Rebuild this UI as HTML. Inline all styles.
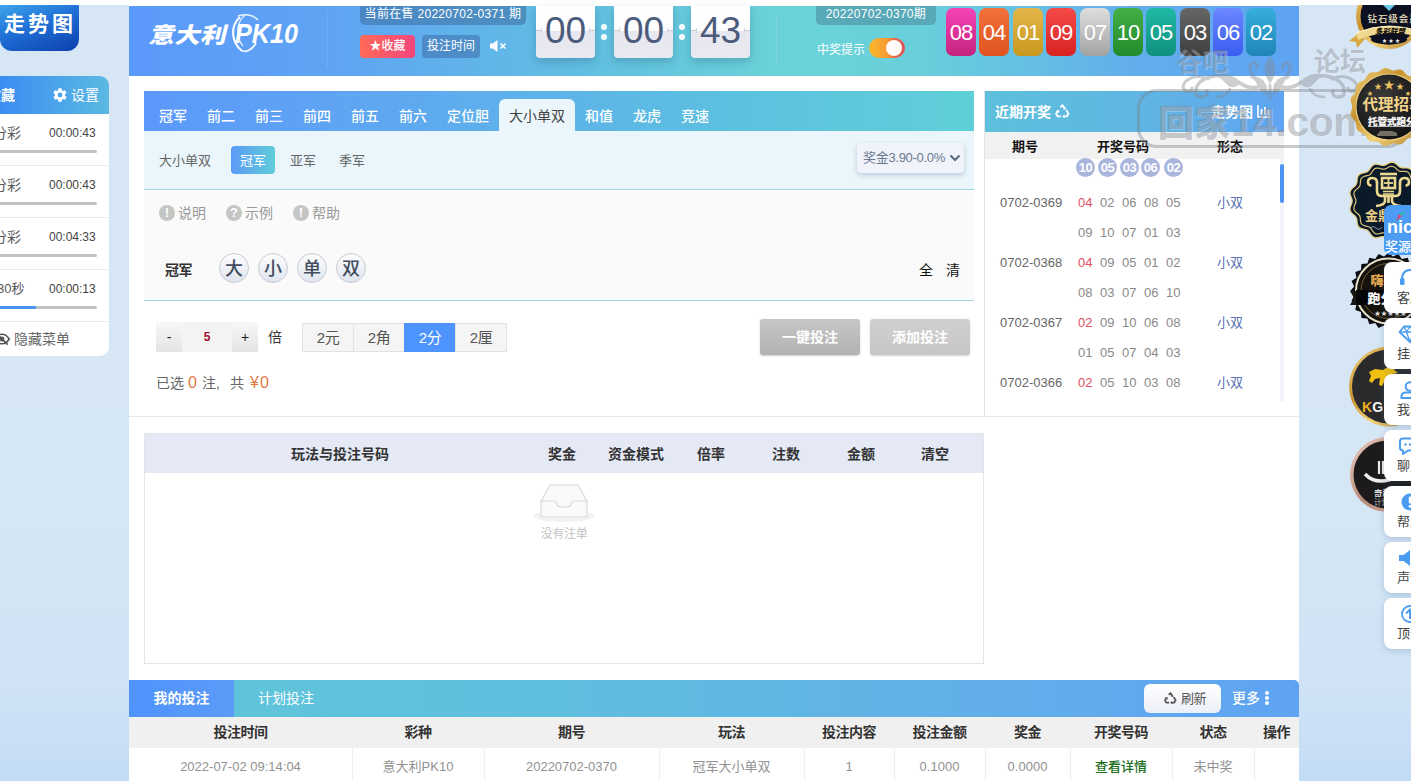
<!DOCTYPE html>
<html lang="zh-CN">
<head>
<meta charset="utf-8">
<title>意大利PK10</title>
<style>
*{box-sizing:border-box;margin:0;padding:0}
html,body{width:1411px;height:781px;overflow:hidden}
body{position:relative;background:linear-gradient(180deg,#d7e6f5 0%,#d5e6f5 68%,#cfe3f5 88%,#c3dcf5 100%);font-family:"Liberation Sans","Noto Sans CJK SC",sans-serif;font-size:13px;color:#333}
.abs{position:absolute}
.topbar{left:0;top:0;width:1411px;height:5px;background:#fff}
.trend{left:0;top:5px;width:79px;height:46px;border-radius:0 0 12px 12px;background:linear-gradient(160deg,#3fa4ec 0%,#1f6fd6 45%,#0d3fae 100%);color:#fff;font-weight:bold;font-size:21px;line-height:37px;letter-spacing:3px;padding-left:4px;white-space:nowrap}
/* sidebar */
.side{left:0;top:76px;width:109px;height:280px;background:#fff;border-radius:0 9px 9px 0;overflow:hidden}
.side .hd{left:0;top:0;width:109px;height:38px;background:linear-gradient(90deg,#3b8df2,#5bb9e2);color:#fff;font-size:14px;line-height:38px}
.side .row{left:0;width:109px;height:52px;border-bottom:1px solid #ececec}
.side .row .nm{left:-7px;top:10px;font-size:14px;color:#555;line-height:18px}
.side .row .tm{left:49px;top:10px;font-size:12px;color:#444;line-height:18px;letter-spacing:0}
.side .row .bar{left:-4px;top:36px;width:101px;height:3px;border-radius:2px;background:#c2c2c2}
/* main */
.main{left:129px;top:5px;width:1170px;height:776px;background:#fff}
.header{left:129px;top:6px;width:1170px;height:70px;background:linear-gradient(90deg,#5b99fb 0%,#5fa5f3 18%,#62c0e0 40%,#6ad3d8 56%,#69cfdb 68%,#62aeec 86%,#5fa3f3 100%)}
.pill{height:19px;top:0;border-radius:0 0 5px 5px;background:rgba(60,110,160,.55);color:#fff;font-size:12px;line-height:17px;text-align:center;white-space:nowrap;letter-spacing:.3px}
.btn-fav{left:360px;top:35px;width:55px;height:23px;border-radius:4px;background:linear-gradient(90deg,#ff6a58,#f2467e);color:#fff;font-size:12px;font-weight:500;line-height:23px;text-align:center;letter-spacing:0}
.btn-time{left:422px;top:35px;width:58px;height:23px;border-radius:4px;background:rgba(60,110,170,.55);color:#fff;font-size:12px;line-height:23px;text-align:center;letter-spacing:0}
.flip{top:6px;width:59px;height:52px;border-radius:0 0 4px 4px;background:linear-gradient(180deg,#fff 0,#fdfdfe 47%,#e7e8ef 49%,#e9eaf1 100%);box-shadow:0 4px 8px rgba(40,90,120,.3);color:#4c5b7c;font-size:37px;line-height:49px;text-align:center;letter-spacing:0;font-family:"Liberation Sans",sans-serif}
.dot{width:6px;height:6px;border-radius:50%;background:#f4fbff}
.ball{top:8px;width:30px;height:48px;border-radius:7px;color:#fff;font-size:22px;line-height:50px;text-align:center;letter-spacing:-1px}

.tabbar{left:144px;top:91px;width:830px;height:40px;background:linear-gradient(90deg,#5b99fb 0%,#5fa8f0 30%,#5cc0e0 70%,#5fd0d8 100%)}
.tab{top:99px;height:32px;color:#fff;font-weight:500;font-size:14px;line-height:35px;white-space:nowrap;letter-spacing:0}
.tab.on{background:#eaf6fb;color:#444;font-weight:400;border-radius:6px 6px 0 0;text-align:center}
.subbar{left:144px;top:131px;width:830px;height:59px;background:#eaf6fb;border-bottom:1px solid #9ed6e2}
.sub{top:146px;height:28px;font-size:13px;line-height:30px;color:#666;white-space:nowrap;letter-spacing:0}
.play{left:144px;top:190px;width:830px;height:111px;background:#fafafa;border-bottom:1px solid #9ed6dc}
.hint{top:204px;font-size:14px;color:#999;line-height:18px;white-space:nowrap}
.ic{top:205px;width:16px;height:16px;border-radius:50%;background:#c4c6c4;color:#fff;font-size:13px;font-weight:bold;line-height:16px;text-align:center;font-family:"Liberation Sans",sans-serif}
.opt{top:253px;width:30px;height:30px;border-radius:50%;border:1px solid #c9ccd2;background:linear-gradient(#fdfdfe,#dfe5ef);color:#444c5e;font-size:18px;line-height:30px;text-align:center;font-weight:500}
.stp{top:322px;height:30px;background:linear-gradient(#f7f7f7,#e4e4e4);color:#222;font-size:14px;line-height:30px;text-align:center}
.mode{top:323px;width:52px;height:29px;border:1px solid #e3e3e3;background:#f5f5f5;color:#555;font-size:15px;line-height:27px;text-align:center;letter-spacing:-.5px}
.mode.on{background:#4d94ff;border-color:#4d94ff;color:#fff}
.bigbtn{top:319px;width:100px;height:36px;border-radius:3px;color:#fff;font-size:14px;font-weight:bold;line-height:36px;text-align:center;letter-spacing:0;box-shadow:0 1px 2px rgba(0,0,0,.2)}

.th3{top:138px;font-size:13px;font-weight:bold;color:#111;line-height:18px;text-align:center;white-space:nowrap}
.rr{font-size:13px;line-height:18px;color:#888;white-space:nowrap}
.cir{top:158px;width:19px;height:19px;border-radius:50%;background:#a9b5dd;color:#fff;font-size:13px;font-weight:bold;line-height:19px;text-align:center;letter-spacing:-.5px}

.otab{left:144px;top:433px;width:840px;height:231px;border:1px solid #e3e5e8;background:#fff}
.oth{top:445px;font-size:14px;font-weight:bold;color:#333;line-height:18px;text-align:center;white-space:nowrap;letter-spacing:0}
.bbar{left:129px;top:680px;width:1170px;height:37px;border-radius:0 5px 0 0;background:linear-gradient(90deg,#5fc6d9 0%,#60bfde 35%,#62b0e8 70%,#5fa3f2 100%)}
.bth{top:723px;font-size:14px;font-weight:bold;color:#333;line-height:18px;text-align:center;white-space:nowrap;letter-spacing:-.5px}
.btd{top:758px;font-size:13px;color:#929292;line-height:18px;text-align:center;white-space:nowrap}
.vl{top:748px;width:1px;height:33px;background:#eeeeee}
.fcard{left:1384px;width:52px;height:51px;border-radius:8px;background:#fff;box-shadow:0 2px 6px rgba(80,110,150,.28);overflow:hidden}
.fcard svg{position:absolute;left:14px;top:7px}
.fcard span{position:absolute;left:13px;top:27px;font-size:13px;color:#444;line-height:18px;white-space:nowrap}
.badge{border-radius:50%}

.wm{color:rgba(120,126,132,.40);font-weight:bold;line-height:36px;white-space:nowrap;text-shadow:1px 1px 0 rgba(255,255,255,.25)}
.sel{top:373px;font-size:14px;color:#666;line-height:20px;white-space:nowrap}
</style>
</head>
<body>
<div class="abs topbar"></div>
<div class="abs main"></div>
<div class="abs trend">走势图</div>
<div class="abs side">
 <div class="abs hd"><span class="abs" style="left:-13px;font-weight:bold">收藏</span>
  <svg class="abs" style="left:52px;top:11px" width="16" height="16" viewBox="0 0 24 24"><path fill="#fff" d="M19.4 13c.04-.33.06-.66.06-1s-.02-.67-.06-1l2.1-1.65a.5.5 0 0 0 .12-.64l-2-3.46a.5.5 0 0 0-.61-.22l-2.49 1a7.3 7.3 0 0 0-1.73-1l-.38-2.65A.5.5 0 0 0 13.900 2h-4a.5.5 0 0 0-.49.420l-.38 2.650a7.700 7.700 0 0 0-1.730 1l-2.490-1a.5.5 0 0 0-.61.220l-2 3.460a.5.5 0 0 0 .12.640L4.600 11c-.04.330-.06.660-.06 1s.02.670.06 1l-2.100 1.650a.5.5 0 0 0-.12.640l2 3.460c.120.220.390.300.610.220l2.490-1c.520.400 1.100.730 1.730 1l.380 2.650c.03.240.240.420.490.420h4c.250 0 .460-.180.490-.420l.380-2.650a7.300 7.300 0 0 0 1.730-1l2.490 1c.220.080.490 0 .610-.220l2-3.460a.5.5 0 0 0-.12-.640L19.400 13zM12 15.600A3.600 3.600 0 1 1 12 8.400a3.600 3.600 0 0 1 0 7.200z"/></svg>
  <span class="abs" style="left:71px">设置</span></div>
 <div class="abs row" style="top:38px"><span class="abs nm">分彩</span><span class="abs tm">00:00:43</span><div class="abs bar"></div></div>
 <div class="abs row" style="top:90px"><span class="abs nm">分彩</span><span class="abs tm">00:00:43</span><div class="abs bar"></div></div>
 <div class="abs row" style="top:142px"><span class="abs nm">分彩</span><span class="abs tm">00:04:33</span><div class="abs bar"></div></div>
 <div class="abs row" style="top:194px"><span class="abs nm" style="left:-3px;font-size:13px">30秒</span><span class="abs tm">00:00:13</span><div class="abs bar"><div class="abs" style="left:0;top:0;width:40px;height:3px;background:#4d94f0"></div></div></div>
 <svg class="abs" style="left:-6px;top:256px" width="16" height="14" viewBox="0 0 20 16"><path fill="none" stroke="#555" stroke-width="2" d="M1 8c3-5 6-6 9-6s6 1 9 6c-3 5-6 6-9 6s-6-1-9-6z"/><circle cx="10" cy="8" r="3" fill="#555"/><path stroke="#555" stroke-width="2.200" d="M3 1l14 14"/></svg>
 <span class="abs" style="left:14px;top:254px;font-size:14px;color:#666;line-height:18px">隐藏菜单</span>
</div>
<div class="abs header"></div>
<div class="abs" style="left:150px;top:14px;width:160px;height:40px;color:#fff;white-space:nowrap"><span class="abs" id="lg1" style="left:0;top:6px;font-size:22px;line-height:32px;font-weight:900;transform-origin:0 50%;transform:scaleX(1.17) skewX(-12deg)">意大利</span><span class="abs" id="lg2" style="left:85px;top:2px;font-size:28px;line-height:36px;font-weight:bold;font-style:italic;font-family:'Liberation Sans',sans-serif;transform-origin:0 50%;transform:scaleX(.9)">PK10</span>
<svg class="abs" style="left:78px;top:0px" width="40" height="42" viewBox="0 0 40 42"><path d="M12 3C2 12 3 28 14 37" fill="none" stroke="#fff" stroke-width="2.200" opacity=".95"/><path d="M17 1C8 9 7 22 15 32" fill="none" stroke="#fff" stroke-width="1.300" opacity=".8"/><path d="M10 2q12-4 20 4" fill="none" stroke="#fff" stroke-width="1.500" opacity=".85"/><path d="M14 37q8 2 14-8" fill="none" stroke="#fff" stroke-width="1.800" opacity=".9"/></svg></div>
<div class="abs" style="left:327px;top:12px;width:1px;height:56px;background:rgba(255,255,255,.09)"></div>
<div class="abs pill" style="left:360px;top:6px;width:166px">当前在售 20220702-0371 期</div>
<div class="abs btn-fav">★收藏</div>
<div class="abs btn-time">投注时间</div>
<svg class="abs" style="left:490px;top:39px" width="17" height="14" viewBox="0 0 17 14"><path fill="#fff" d="M0 4.500h3L7.500 1v12L3 9.500H0z"/><path stroke="#fff" stroke-width="1.600" d="M10.500 4.500l5 5M15.500 4.500l-5 5"/></svg>
<div class="abs flip" style="left:536px">00</div>
<div class="abs flip" style="left:614px">00</div>
<div class="abs flip" style="left:691px">43</div>
<div class="abs" style="left:536px;top:30px;width:59px;height:1px;background:linear-gradient(90deg,#c9cad4 0,#c9cad4 5px,rgba(0,0,0,0) 5px,rgba(0,0,0,0) 54px,#c9cad4 54px)"></div><div class="abs" style="left:541px;top:28px;width:1px;height:5px;background:#d0d1da"></div><div class="abs" style="left:589px;top:28px;width:1px;height:5px;background:#d0d1da"></div><div class="abs" style="left:614px;top:30px;width:59px;height:1px;background:linear-gradient(90deg,#c9cad4 0,#c9cad4 5px,rgba(0,0,0,0) 5px,rgba(0,0,0,0) 54px,#c9cad4 54px)"></div><div class="abs" style="left:619px;top:28px;width:1px;height:5px;background:#d0d1da"></div><div class="abs" style="left:667px;top:28px;width:1px;height:5px;background:#d0d1da"></div><div class="abs" style="left:691px;top:30px;width:59px;height:1px;background:linear-gradient(90deg,#c9cad4 0,#c9cad4 5px,rgba(0,0,0,0) 5px,rgba(0,0,0,0) 54px,#c9cad4 54px)"></div><div class="abs" style="left:696px;top:28px;width:1px;height:5px;background:#d0d1da"></div><div class="abs" style="left:744px;top:28px;width:1px;height:5px;background:#d0d1da"></div><div class="abs dot" style="left:601px;top:24px"></div><div class="abs dot" style="left:601px;top:34px"></div>
<div class="abs dot" style="left:679px;top:24px"></div><div class="abs dot" style="left:679px;top:34px"></div>
<div class="abs" style="left:776px;top:12px;width:1px;height:56px;background:rgba(255,255,255,.1)"></div>
<div class="abs pill" style="left:816px;top:6px;width:120px;background:rgba(70,130,150,.5)">20220702-0370期</div>
<div class="abs" style="left:817px;top:42px;font-size:12px;color:#fff;line-height:16px;letter-spacing:0">中奖提示</div>
<div class="abs" style="left:869px;top:38px;width:36px;height:20px;border-radius:10px;background:linear-gradient(90deg,#f9ba2a 0%,#f89a34 50%,#e8604c 75%,#dc5454 100%)"><div class="abs" style="right:3px;top:2px;width:16px;height:16px;border-radius:50%;background:#fffaf8"></div></div>
<div class="abs ball" style="left:946px;background:linear-gradient(#f544b6,#c4227f)">08</div>
<div class="abs ball" style="left:979px;background:linear-gradient(#f2713a,#e0531f)">04</div>
<div class="abs ball" style="left:1013px;background:linear-gradient(#e3b64b,#c8981e)">01</div>
<div class="abs ball" style="left:1046px;background:linear-gradient(#f44a48,#d92222)">09</div>
<div class="abs ball" style="left:1080px;background:linear-gradient(#dedede,#a2a2a2)">07</div>
<div class="abs ball" style="left:1113px;background:linear-gradient(#46ae46,#238b2b)">10</div>
<div class="abs ball" style="left:1146px;background:linear-gradient(#1fb9a4,#0f907e)">05</div>
<div class="abs ball" style="left:1180px;background:linear-gradient(#666,#3f3f3f)">03</div>
<div class="abs ball" style="left:1213px;background:linear-gradient(#6c88ff,#3a5cf0)">06</div>
<div class="abs ball" style="left:1246px;background:linear-gradient(#37aedb,#1f86b6)">02</div>
<div class="abs tabbar"></div>
<div class="abs tab" style="left:159px">冠军</div><div class="abs tab" style="left:207px">前二</div><div class="abs tab" style="left:255px">前三</div><div class="abs tab" style="left:303px">前四</div><div class="abs tab" style="left:351px">前五</div><div class="abs tab" style="left:399px">前六</div><div class="abs tab" style="left:447px">定位胆</div>
<div class="abs tab on" style="left:499px;width:76px">大小单双</div>
<div class="abs tab" style="left:585px">和值</div><div class="abs tab" style="left:633px">龙虎</div><div class="abs tab" style="left:681px">竞速</div>
<div class="abs subbar"></div>
<div class="abs sub" style="left:159px">大小单双</div>
<div class="abs sub" style="left:231px;width:44px;border-radius:4px;background:linear-gradient(90deg,#5b9bf8,#5fcdd9);color:#fff;text-align:center">冠军</div>
<div class="abs sub" style="left:290px">亚军</div><div class="abs sub" style="left:339px">季军</div>
<div class="abs" style="left:857px;top:143px;width:107px;height:30px;border-radius:4px;background:#f1f3fb;box-shadow:0 2px 5px rgba(80,100,140,.3);font-size:13px;color:#6a7a90;line-height:30px;padding-left:6px;letter-spacing:-.3px;white-space:nowrap">奖金3.90-0.0%</div>
<svg class="abs" style="left:949px;top:154px" width="12" height="8" viewBox="0 0 12 8"><path d="M1.500 1.500L6 6l4.500-4.500" fill="none" stroke="#5a6a80" stroke-width="2"/></svg>
<div class="abs play"></div>
<div class="abs ic" style="left:159px">!</div><div class="abs hint" style="left:178px">说明</div>
<div class="abs ic" style="left:226px">?</div><div class="abs hint" style="left:245px">示例</div>
<div class="abs ic" style="left:293px">!</div><div class="abs hint" style="left:312px">帮助</div>
<div class="abs" style="left:165px;top:261px;font-size:14px;font-weight:bold;color:#333;line-height:18px;letter-spacing:-.5px">冠军</div>
<div class="abs opt" style="left:219px">大</div><div class="abs opt" style="left:258px">小</div><div class="abs opt" style="left:297px">单</div><div class="abs opt" style="left:336px">双</div>
<div class="abs" style="left:919px;top:261px;font-size:14px;color:#111;line-height:18px">全</div><div class="abs" style="left:946px;top:261px;font-size:14px;color:#111;line-height:18px">清</div>
<div class="abs stp" style="left:156px;width:26px">-</div>
<div class="abs stp" style="left:182px;width:50px;background:#f3f3f3;color:#a01030;font-size:12px;font-weight:bold">5</div>
<div class="abs stp" style="left:232px;width:26px">+</div>
<div class="abs" style="left:268px;top:328px;font-size:14px;color:#333;line-height:18px">倍</div>
<div class="abs mode" style="left:302px">2元</div><div class="abs mode" style="left:353px">2角</div><div class="abs mode on" style="left:404px">2分</div><div class="abs mode" style="left:455px">2厘</div>
<div class="abs bigbtn" style="left:760px;background:linear-gradient(#c6c6c6,#b2b2b2)">一键投注</div>
<div class="abs bigbtn" style="left:870px;background:linear-gradient(#d0d0d0,#c6c6c6)">添加投注</div>
<div class="abs sel" style="left:156px">已选</div><div class="abs sel" style="left:188px;color:#e27a42;font-size:16px">0</div><div class="abs sel" style="left:202px">注,</div><div class="abs sel" style="left:230px">共</div><div class="abs sel" style="left:250px;color:#e27a42;font-size:16px;letter-spacing:1px">¥0</div>
<div class="abs" style="left:129px;top:416px;width:1170px;height:1px;background:#e6e8ea"></div>
<div class="abs" style="left:984px;top:91px;width:1px;height:326px;background:#e3e3e3"></div>
<div class="abs" style="left:985px;top:91px;width:299px;height:41px;background:linear-gradient(90deg,#5dc0dc 0%,#60b6e2 50%,#5fa4f3 100%)"></div>
<div class="abs" style="left:995px;top:102px;font-size:14px;font-weight:bold;color:#fff;line-height:20px;letter-spacing:0">近期开奖</div>
<svg class="abs" style="left:1055px;top:104px" width="15" height="15" viewBox="0 0 14 13"><g fill="none" stroke="#fff" stroke-width="1.700"><path d="M5 2.500L7 .8l2 3"/><path d="M10.500 5l2 3.500-1.500 2.500H8.500"/><path d="M5.500 11H2.500L1 8.500 2.800 5.500"/></g><path fill="#fff" d="M7.500 4.800l2.800-.3-.9-2.400zM8.800 9.200v3.600L6.600 11zM1.200 5.800l3.200-.6-1 2.800z"/></svg>
<div class="abs" style="left:1211px;top:102px;font-size:14px;font-weight:bold;color:#fff;line-height:20px;letter-spacing:0">走势图</div>
<svg class="abs" style="left:1257px;top:105px" width="14" height="13" viewBox="0 0 14 13"><path d="M1 0v12h12" fill="none" stroke="#fff" stroke-width="1.600"/><path d="M4.500 4v6M8 2v8M11.500 5v5" stroke="#fff" stroke-width="1.800"/></svg>
<div class="abs" style="left:985px;top:132px;width:299px;height:27px;background:#f1f1f2"></div>
<div class="abs th3" style="left:1005px;width:40px">期号</div><div class="abs th3" style="left:1093px;width:60px">开奖号码</div><div class="abs th3" style="left:1210px;width:40px">形态</div>
<div class="abs cir" style="left:1076px">10</div><div class="abs cir" style="left:1098px">05</div><div class="abs cir" style="left:1120px">03</div><div class="abs cir" style="left:1141px">06</div><div class="abs cir" style="left:1164px">02</div><div class="abs rr" style="left:1000px;top:194px;color:#666">0702-0369</div><div class="abs rr" style="left:1078px;top:194px;color:#dc4e62">04</div><div class="abs rr" style="left:1100px;top:194px;color:#8a8a8a">02</div><div class="abs rr" style="left:1122px;top:194px;color:#8a8a8a">06</div><div class="abs rr" style="left:1144px;top:194px;color:#8a8a8a">08</div><div class="abs rr" style="left:1166px;top:194px;color:#8a8a8a">05</div><div class="abs rr" style="left:1217px;top:194px;color:#5a70b4">小双</div><div class="abs rr" style="left:1078px;top:224px;color:#8a8a8a">09</div><div class="abs rr" style="left:1100px;top:224px;color:#8a8a8a">10</div><div class="abs rr" style="left:1122px;top:224px;color:#8a8a8a">07</div><div class="abs rr" style="left:1144px;top:224px;color:#8a8a8a">01</div><div class="abs rr" style="left:1166px;top:224px;color:#8a8a8a">03</div><div class="abs rr" style="left:1000px;top:254px;color:#666">0702-0368</div><div class="abs rr" style="left:1078px;top:254px;color:#dc4e62">04</div><div class="abs rr" style="left:1100px;top:254px;color:#8a8a8a">09</div><div class="abs rr" style="left:1122px;top:254px;color:#8a8a8a">05</div><div class="abs rr" style="left:1144px;top:254px;color:#8a8a8a">01</div><div class="abs rr" style="left:1166px;top:254px;color:#8a8a8a">02</div><div class="abs rr" style="left:1217px;top:254px;color:#5a70b4">小双</div><div class="abs rr" style="left:1078px;top:284px;color:#8a8a8a">08</div><div class="abs rr" style="left:1100px;top:284px;color:#8a8a8a">03</div><div class="abs rr" style="left:1122px;top:284px;color:#8a8a8a">07</div><div class="abs rr" style="left:1144px;top:284px;color:#8a8a8a">06</div><div class="abs rr" style="left:1166px;top:284px;color:#8a8a8a">10</div><div class="abs rr" style="left:1000px;top:314px;color:#666">0702-0367</div><div class="abs rr" style="left:1078px;top:314px;color:#dc4e62">02</div><div class="abs rr" style="left:1100px;top:314px;color:#8a8a8a">09</div><div class="abs rr" style="left:1122px;top:314px;color:#8a8a8a">10</div><div class="abs rr" style="left:1144px;top:314px;color:#8a8a8a">06</div><div class="abs rr" style="left:1166px;top:314px;color:#8a8a8a">08</div><div class="abs rr" style="left:1217px;top:314px;color:#5a70b4">小双</div><div class="abs rr" style="left:1078px;top:344px;color:#8a8a8a">01</div><div class="abs rr" style="left:1100px;top:344px;color:#8a8a8a">05</div><div class="abs rr" style="left:1122px;top:344px;color:#8a8a8a">07</div><div class="abs rr" style="left:1144px;top:344px;color:#8a8a8a">04</div><div class="abs rr" style="left:1166px;top:344px;color:#8a8a8a">03</div><div class="abs rr" style="left:1000px;top:374px;color:#666">0702-0366</div><div class="abs rr" style="left:1078px;top:374px;color:#dc4e62">02</div><div class="abs rr" style="left:1100px;top:374px;color:#8a8a8a">05</div><div class="abs rr" style="left:1122px;top:374px;color:#8a8a8a">10</div><div class="abs rr" style="left:1144px;top:374px;color:#8a8a8a">03</div><div class="abs rr" style="left:1166px;top:374px;color:#8a8a8a">08</div><div class="abs rr" style="left:1217px;top:374px;color:#5a70b4">小双</div>
<div class="abs" style="left:1280px;top:159px;width:4px;height:242px;background:#f2f4fa"></div>
<div class="abs" style="left:1280px;top:164px;width:4px;height:39px;border-radius:2px;background:#4d94f0"></div>
<div class="abs otab"></div>
<div class="abs" style="left:145px;top:434px;width:838px;height:39px;background:#e4e9f5"></div>
<div class="abs oth" style="left:280px;width:120px">玩法与投注号码</div>
<div class="abs oth" style="left:532px;width:60px">奖金</div><div class="abs oth" style="left:606px;width:60px">资金模式</div><div class="abs oth" style="left:681px;width:60px">倍率</div><div class="abs oth" style="left:756px;width:60px">注数</div><div class="abs oth" style="left:831px;width:60px">金额</div><div class="abs oth" style="left:905px;width:60px">清空</div>
<svg class="abs" style="left:533px;top:481px" width="62" height="42" viewBox="0 0 62 42"><ellipse cx="31" cy="35" rx="31" ry="6" fill="#f2f2f2"/><path d="M8 20L17 4h28l9 16v14a2 2 0 0 1-2 2H10a2 2 0 0 1-2-2z" fill="#fafafa" stroke="#d9d9d9" stroke-width="1.200"/><path d="M8 20h14c1 0 1.500 1 1.500 2 0 2 2 4 4.500 4h6c2.500 0 4.500-2 4.500-4 0-1 .5-2 1.500-2h14" fill="none" stroke="#d9d9d9" stroke-width="1.200"/></svg>
<div class="abs" style="left:534px;top:526px;width:60px;font-size:12px;color:#c4c4c4;line-height:16px;text-align:center;letter-spacing:-.3px">没有注单</div>
<div class="abs bbar"></div>
<div class="abs" style="left:129px;top:680px;width:105px;height:37px;background:linear-gradient(90deg,#4f93fd,#5b9bf8);color:#fff;font-size:14px;font-weight:bold;line-height:36px;text-align:center;letter-spacing:0">我的投注</div>
<div class="abs" style="left:258px;top:680px;color:#fff;font-size:14px;line-height:36px;letter-spacing:0;white-space:nowrap">计划投注</div>
<div class="abs" style="left:1144px;top:684px;width:77px;height:29px;border-radius:6px;background:linear-gradient(#fff,#eceff8);color:#555;font-size:13px;line-height:29px;padding-left:37px;letter-spacing:-.5px;white-space:nowrap">刷新</div>
<svg class="abs rcy" style="left:1164px;top:692px" width="13" height="13" viewBox="0 0 14 13"><g fill="none" stroke="#555" stroke-width="1.900"><path d="M5 2.500L7 .8l2 3"/><path d="M10.500 5l2 3.500-1.500 2.500H8.500"/><path d="M5.500 11H2.500L1 8.500 2.800 5.500"/></g><path fill="#555" d="M7.500 4.800l2.800-.3-.9-2.400zM8.800 9.200v3.600L6.600 11zM1.200 5.800l3.200-.6-1 2.800z"/></svg>
<div class="abs" style="left:1232px;top:680px;color:#fff;font-size:14px;font-weight:500;line-height:36px;letter-spacing:0;white-space:nowrap">更多</div>
<div class="abs" style="left:1265px;top:691px;width:4px;height:4px;border-radius:50%;background:#fff;box-shadow:0 5px 0 #fff,0 10px 0 #fff"></div>
<div class="abs" style="left:129px;top:717px;width:1170px;height:31px;background:#f1f0f0"></div>
<div class="abs bth" style="left:129px;width:223px">投注时间</div><div class="abs bth" style="left:352px;width:132px">彩种</div><div class="abs bth" style="left:484px;width:175px">期号</div><div class="abs bth" style="left:659px;width:145px">玩法</div><div class="abs bth" style="left:804px;width:90px">投注内容</div><div class="abs bth" style="left:894px;width:91px">投注金额</div><div class="abs bth" style="left:985px;width:85px">奖金</div><div class="abs bth" style="left:1070px;width:102px">开奖号码</div><div class="abs bth" style="left:1172px;width:82px">状态</div><div class="abs bth" style="left:1254px;width:45px">操作</div>
<div class="abs btd" style="left:129px;width:223px">2022-07-02 09:14:04</div><div class="abs btd" style="left:352px;width:132px">意大利PK10</div><div class="abs btd" style="left:484px;width:175px">20220702-0370</div><div class="abs btd" style="left:659px;width:145px">冠军大小单双</div><div class="abs btd" style="left:804px;width:90px">1</div><div class="abs btd" style="left:894px;width:91px">0.1000</div><div class="abs btd" style="left:985px;width:85px">0.0000</div><div class="abs btd" style="left:1070px;width:102px;color:#1a6e1a;font-weight:500">查看详情</div><div class="abs btd" style="left:1172px;width:82px">未中奖</div>
<div class="abs vl" style="left:352px"></div><div class="abs vl" style="left:484px"></div><div class="abs vl" style="left:659px"></div><div class="abs vl" style="left:804px"></div><div class="abs vl" style="left:894px"></div><div class="abs vl" style="left:985px"></div><div class="abs vl" style="left:1070px"></div><div class="abs vl" style="left:1172px"></div><div class="abs vl" style="left:1254px"></div>
<div class="abs wm" style="left:1176px;top:44px;font-size:26px">谷吧</div>
<div class="abs wm" style="left:1314px;top:44px;font-size:26px">论坛</div>
<svg class="abs" style="left:1176px;top:55px;opacity:.42" width="188" height="52" viewBox="-94 0 188 52"><g fill="none" stroke="#868a8e" stroke-linecap="round"><path d="M-12 32q-10 2-18-4q-14-10-30-6q-12 3-14 12q-2 8 6 8q6 0 5-6" stroke-width="3.500"/><path d="M-30 28q-10-12-26-8q8 2 12 8q6 8 14 0z" fill="#8a8e92" stroke-width="1"/><path d="M-62 24q-12-6-22 2q-6 6 0 10q5 2 6-3" stroke-width="3"/><path d="M-40 34q-4 8-14 8" stroke-width="2.500"/><path d="M-8 26q-10-2-12-12q-1-6 4-6q4 0 3 5" stroke-width="3"/><g transform="scale(-1 1)"><path d="M-12 32q-10 2-18-4q-14-10-30-6q-12 3-14 12q-2 8 6 8q6 0 5-6" stroke-width="3.500"/><path d="M-30 28q-10-12-26-8q8 2 12 8q6 8 14 0z" fill="#8a8e92" stroke-width="1"/><path d="M-62 24q-12-6-22 2q-6 6 0 10q5 2 6-3" stroke-width="3"/><path d="M-40 34q-4 8-14 8" stroke-width="2.500"/><path d="M-8 26q-10-2-12-12q-1-6 4-6q4 0 3 5" stroke-width="3"/></g><path d="M0 2q-7 9-4 18q2 5 4 8q2-3 4-8q3-9-4-18z" fill="#868a8e" stroke-width="1"/><path d="M-4 30q-6-10-16-8q6 2 8 8q2 6 8 10z M4 30q6-10 16-8q-6 2-8 8q-2 6-8 10z" fill="#868a8e" stroke-width="1"/><path d="M0 30v14" stroke-width="3"/></g></svg>
<div class="abs" style="left:1137px;top:89px;width:270px;height:59px;border:3px solid rgba(125,130,135,.42);border-radius:20px"></div>
<div class="abs wm" style="left:1158px;top:97px;font-size:36px;font-weight:900;line-height:50px">回家<span style="font-size:41px;letter-spacing:-.5px;margin-left:1px">14.com</span></div><svg class="abs" style="left:1340px;top:5px" width="71" height="520" viewBox="1340 5 71 520" font-family="Liberation Sans, Noto Sans CJK SC, sans-serif">
<defs>
<linearGradient id="gd" x1="0" y1="0" x2="1" y2="1"><stop offset="0" stop-color="#f6d98a"/><stop offset=".35" stop-color="#c8922e"/><stop offset=".6" stop-color="#f3d27a"/><stop offset="1" stop-color="#a87420"/></linearGradient>
<linearGradient id="rg" x1="0" y1="0" x2="1" y2="1"><stop offset="0" stop-color="#ecd0c2"/><stop offset=".5" stop-color="#b88a78"/><stop offset="1" stop-color="#e0bca8"/></linearGradient>
<radialGradient id="bk" cx=".4" cy=".35" r=".8"><stop offset="0" stop-color="#3a3a3a"/><stop offset="1" stop-color="#0c0c0c"/></radialGradient>
</defs>
<!-- badge1 -->
<path d="M1358 34l-9 7 7 1 1 6 8-9z" fill="#d8a840"/>
<circle cx="1389" cy="16" r="33" fill="url(#gd)"/><circle cx="1389" cy="16" r="28.500" fill="#0c1020"/>
<path d="M1383 5h12l-6 6z" fill="#6ac8e8"/>
<path d="M1356 33Q1389 19 1424 33v5.500Q1389 27 1358 40z" fill="#f0d890"/>
<path d="M1356 33Q1389 19 1424 33" fill="none" stroke="#fff3c8" stroke-width="1"/>
<ellipse cx="1389" cy="39.500" rx="18" ry="5" fill="#0c1020"/>
<path d="M1358 40Q1389 29 1424 40l0 5Q1389 56 1360 44z" fill="none"/>
<text x="1367.500" y="22" font-size="9.500" font-weight="bold" fill="#cfc8a8" letter-spacing="0.900">钻石级会员</text>
<text x="1375" y="33.500" font-size="7.500" font-weight="900" fill="#15110a" font-style="italic">多彩联盟</text>
<text x="1382" y="41.500" font-size="5" fill="#eee" letter-spacing="1.500">★★★</text>
<!-- badge2 -->
<path d="M1428.2 107.0L1428.0 108.4L1427.5 109.7L1426.8 111.0L1426.0 112.2L1425.4 113.4L1425.0 114.7L1424.9 115.9L1425.0 117.3L1425.1 118.7L1425.3 120.2L1425.2 121.6L1424.8 122.9L1424.1 124.1L1423.1 125.1L1421.9 126.0L1420.7 126.8L1419.6 127.7L1418.8 128.6L1418.1 129.8L1417.7 131.0L1417.2 132.4L1416.8 133.8L1416.1 135.1L1415.2 136.1L1414.1 136.9L1412.8 137.4L1411.3 137.7L1409.9 138.0L1408.6 138.3L1407.4 138.9L1406.4 139.6L1405.4 140.6L1404.5 141.7L1403.5 142.8L1402.4 143.7L1401.1 144.3L1399.8 144.5L1398.3 144.5L1396.9 144.2L1395.5 143.8L1394.1 143.6L1392.8 143.6L1391.6 143.9L1390.3 144.4L1389.0 145.0L1387.7 145.6L1386.3 145.9L1384.9 146.0L1383.6 145.7L1382.3 145.0L1381.1 144.2L1380.0 143.3L1378.8 142.5L1377.6 142.0L1376.4 141.7L1375.0 141.7L1373.5 141.7L1372.1 141.7L1370.7 141.5L1369.4 140.9L1368.3 140.1L1367.4 139.0L1366.7 137.7L1366.0 136.5L1365.2 135.3L1364.4 134.3L1363.3 133.6L1362.1 133.0L1360.8 132.4L1359.4 131.8L1358.2 131.0L1357.3 130.0L1356.6 128.8L1356.3 127.5L1356.1 126.0L1356.0 124.6L1355.8 123.2L1355.4 122.0L1354.7 120.8L1353.9 119.8L1352.9 118.7L1351.9 117.6L1351.1 116.4L1350.7 115.2L1350.6 113.8L1350.8 112.4L1351.2 111.0L1351.7 109.6L1352.1 108.3L1352.2 107.0L1352.1 105.7L1351.7 104.4L1351.2 103.0L1350.8 101.6L1350.6 100.2L1350.7 98.8L1351.1 97.6L1351.9 96.4L1352.9 95.3L1353.9 94.2L1354.7 93.2L1355.4 92.0L1355.8 90.8L1356.0 89.4L1356.1 88.0L1356.3 86.5L1356.6 85.2L1357.3 84.0L1358.2 83.0L1359.4 82.2L1360.8 81.6L1362.1 81.0L1363.3 80.4L1364.4 79.7L1365.2 78.7L1366.0 77.5L1366.7 76.3L1367.4 75.0L1368.3 73.9L1369.4 73.1L1370.7 72.5L1372.1 72.3L1373.5 72.3L1375.0 72.3L1376.4 72.3L1377.6 72.0L1378.8 71.5L1380.0 70.7L1381.1 69.8L1382.3 69.0L1383.6 68.3L1384.9 68.0L1386.3 68.1L1387.7 68.4L1389.0 69.0L1390.3 69.6L1391.6 70.1L1392.8 70.4L1394.1 70.4L1395.5 70.2L1396.9 69.8L1398.3 69.5L1399.8 69.5L1401.1 69.7L1402.4 70.3L1403.5 71.2L1404.5 72.3L1405.4 73.4L1406.4 74.4L1407.4 75.1L1408.6 75.7L1409.9 76.0L1411.3 76.3L1412.8 76.6L1414.1 77.1L1415.2 77.9L1416.1 78.9L1416.8 80.2L1417.2 81.6L1417.7 83.0L1418.1 84.2L1418.8 85.4L1419.6 86.3L1420.7 87.2L1421.9 88.0L1423.1 88.9L1424.1 89.9L1424.8 91.1L1425.2 92.4L1425.3 93.8L1425.1 95.3L1425.0 96.7L1424.9 98.1L1425.0 99.3L1425.4 100.6L1426.0 101.8L1426.8 103.0L1427.5 104.3L1428.0 105.6L1428.2 107.0Z" fill="url(#gd)"/><circle cx="1389" cy="107" r="33.500" fill="#f3d88a"/><circle cx="1389" cy="107" r="32.500" fill="url(#bk)"/>
<text x="1367" y="95" font-size="6" fill="#e8c060">★</text><text x="1374" y="89" font-size="8" fill="#e8c060">★</text><text x="1383.500" y="88.500" font-size="11" fill="#e8c060">★</text><text x="1396" y="89" font-size="8" fill="#e8c060">★</text><text x="1405" y="95" font-size="6" fill="#e8c060">★</text>
<text x="1362.500" y="110" font-size="15.500" font-weight="bold" fill="#f2d48a">代理招募</text>
<text x="1368" y="125" font-size="9.500" font-weight="bold" fill="#fff" stroke="#fff" stroke-width=".3">托管式跑分</text>
<path d="M1368 126.500h43" stroke="#ddd" stroke-width=".8"/>
<path d="M1377 135l3-4h12l5 2v3h-20z" fill="#8a8578" opacity=".8"/>
<!-- badge3 -->
<path d="M1427.8 201.0L1427.6 202.6L1426.9 204.1L1425.9 205.6L1424.9 207.0L1424.1 208.4L1423.5 209.8L1423.4 211.2L1423.5 212.8L1423.7 214.5L1423.9 216.3L1423.8 218.0L1423.2 219.5L1422.3 220.8L1421.0 221.8L1419.4 222.7L1417.9 223.5L1416.5 224.3L1415.4 225.3L1414.6 226.5L1413.9 228.0L1413.3 229.6L1412.7 231.2L1411.8 232.6L1410.6 233.8L1409.2 234.5L1407.5 234.8L1405.8 234.8L1404.0 234.8L1402.4 234.9L1401.0 235.2L1399.7 235.9L1398.4 236.9L1397.1 238.1L1395.8 239.2L1394.3 240.1L1392.8 240.5L1391.2 240.5L1389.6 240.0L1388.0 239.2L1386.5 238.4L1385.0 237.7L1383.6 237.3L1382.1 237.3L1380.5 237.6L1378.9 238.1L1377.1 238.5L1375.5 238.5L1373.9 238.2L1372.5 237.4L1371.3 236.2L1370.2 234.8L1369.3 233.4L1368.3 232.1L1367.2 231.1L1365.9 230.4L1364.3 230.0L1362.7 229.6L1361.0 229.1L1359.5 228.4L1358.2 227.4L1357.3 226.0L1356.8 224.4L1356.6 222.7L1356.4 221.0L1356.1 219.4L1355.6 218.0L1354.7 216.8L1353.6 215.7L1352.3 214.5L1351.0 213.4L1350.0 212.0L1349.4 210.5L1349.2 208.9L1349.5 207.3L1350.1 205.6L1350.7 204.0L1351.2 202.5L1351.4 201.0L1351.2 199.5L1350.7 198.0L1350.1 196.4L1349.5 194.7L1349.2 193.1L1349.4 191.5L1350.0 190.0L1351.0 188.6L1352.3 187.5L1353.6 186.3L1354.7 185.2L1355.6 184.0L1356.1 182.6L1356.4 181.0L1356.6 179.3L1356.8 177.6L1357.3 176.0L1358.2 174.6L1359.5 173.6L1361.0 172.9L1362.7 172.4L1364.3 172.0L1365.9 171.6L1367.2 170.9L1368.3 169.9L1369.3 168.6L1370.2 167.2L1371.3 165.8L1372.5 164.6L1373.9 163.8L1375.5 163.5L1377.1 163.5L1378.9 163.9L1380.5 164.4L1382.1 164.7L1383.6 164.7L1385.0 164.3L1386.5 163.6L1388.0 162.8L1389.6 162.0L1391.2 161.5L1392.8 161.5L1394.3 161.9L1395.8 162.8L1397.1 163.9L1398.4 165.1L1399.7 166.1L1401.0 166.8L1402.4 167.1L1404.0 167.2L1405.8 167.2L1407.5 167.2L1409.2 167.5L1410.6 168.2L1411.8 169.4L1412.7 170.8L1413.3 172.4L1413.9 174.0L1414.6 175.5L1415.4 176.7L1416.5 177.7L1417.9 178.5L1419.4 179.3L1421.0 180.2L1422.3 181.2L1423.2 182.5L1423.8 184.0L1423.9 185.7L1423.7 187.5L1423.5 189.2L1423.4 190.8L1423.5 192.2L1424.1 193.6L1424.9 195.0L1425.9 196.4L1426.9 197.9L1427.6 199.4L1427.8 201.0Z" fill="#e9cf86"/><path d="M1426.4 201.0L1426.2 202.5L1425.5 204.0L1424.5 205.4L1423.5 206.8L1422.7 208.1L1422.2 209.4L1422.0 210.9L1422.1 212.4L1422.4 214.0L1422.6 215.7L1422.5 217.4L1422.0 218.8L1421.1 220.1L1419.8 221.1L1418.3 221.9L1416.8 222.6L1415.4 223.4L1414.3 224.3L1413.5 225.5L1412.9 227.0L1412.4 228.5L1411.8 230.1L1410.9 231.5L1409.8 232.6L1408.4 233.3L1406.8 233.6L1405.1 233.6L1403.4 233.5L1401.9 233.6L1400.5 233.9L1399.2 234.6L1398.0 235.6L1396.8 236.7L1395.5 237.8L1394.1 238.7L1392.6 239.1L1391.1 239.1L1389.5 238.6L1388.0 237.8L1386.6 237.0L1385.2 236.3L1383.8 235.9L1382.3 236.0L1380.8 236.3L1379.2 236.7L1377.5 237.1L1375.9 237.2L1374.4 236.9L1373.0 236.1L1371.9 235.0L1370.9 233.6L1370.0 232.2L1369.1 230.9L1368.0 230.0L1366.7 229.3L1365.2 228.9L1363.6 228.5L1362.0 228.1L1360.5 227.5L1359.3 226.5L1358.4 225.2L1357.9 223.6L1357.7 221.9L1357.6 220.2L1357.3 218.7L1356.8 217.4L1356.0 216.2L1354.9 215.1L1353.6 214.0L1352.3 212.9L1351.3 211.6L1350.7 210.2L1350.6 208.6L1350.9 207.0L1351.5 205.4L1352.1 203.9L1352.6 202.4L1352.8 201.0L1352.6 199.6L1352.1 198.1L1351.5 196.6L1350.9 195.0L1350.6 193.4L1350.7 191.8L1351.3 190.4L1352.3 189.1L1353.6 188.0L1354.9 186.9L1356.0 185.8L1356.8 184.6L1357.3 183.3L1357.6 181.8L1357.7 180.1L1357.9 178.4L1358.4 176.8L1359.3 175.5L1360.5 174.5L1362.0 173.9L1363.6 173.5L1365.2 173.1L1366.7 172.7L1368.0 172.0L1369.1 171.1L1370.0 169.8L1370.9 168.4L1371.9 167.0L1373.0 165.9L1374.4 165.1L1375.9 164.8L1377.5 164.9L1379.2 165.3L1380.8 165.7L1382.3 166.0L1383.8 166.1L1385.2 165.7L1386.6 165.0L1388.0 164.2L1389.5 163.4L1391.1 162.9L1392.6 162.9L1394.1 163.3L1395.5 164.2L1396.8 165.3L1398.0 166.4L1399.2 167.4L1400.5 168.1L1401.9 168.4L1403.4 168.5L1405.1 168.4L1406.8 168.4L1408.4 168.7L1409.8 169.4L1410.9 170.5L1411.8 171.9L1412.4 173.5L1412.9 175.0L1413.5 176.5L1414.3 177.7L1415.4 178.6L1416.8 179.4L1418.3 180.1L1419.8 180.9L1421.1 181.9L1422.0 183.2L1422.5 184.6L1422.6 186.3L1422.4 188.0L1422.1 189.6L1422.0 191.1L1422.2 192.6L1422.7 193.9L1423.5 195.2L1424.5 196.6L1425.5 198.0L1426.2 199.5L1426.4 201.0Z" fill="#0b1a29"/><path d="M1423.0 201.0L1422.8 202.4L1422.1 203.8L1421.3 205.0L1420.3 206.3L1419.6 207.4L1419.1 208.7L1418.9 210.0L1419.1 211.4L1419.3 212.9L1419.5 214.4L1419.4 215.9L1419.0 217.3L1418.1 218.4L1416.9 219.3L1415.6 220.0L1414.2 220.7L1412.9 221.4L1412.0 222.2L1411.2 223.3L1410.7 224.6L1410.2 226.1L1409.7 227.5L1408.9 228.8L1407.9 229.8L1406.6 230.4L1405.1 230.7L1403.6 230.7L1402.0 230.6L1400.6 230.6L1399.3 230.9L1398.2 231.5L1397.1 232.5L1396.0 233.5L1394.9 234.6L1393.6 235.3L1392.2 235.7L1390.8 235.7L1389.4 235.2L1388.0 234.5L1386.7 233.7L1385.4 233.1L1384.1 232.8L1382.8 232.8L1381.4 233.1L1380.0 233.5L1378.5 233.9L1377.0 234.0L1375.6 233.7L1374.4 233.0L1373.3 231.9L1372.4 230.7L1371.6 229.4L1370.8 228.2L1369.8 227.3L1368.7 226.7L1367.3 226.4L1365.8 226.1L1364.3 225.7L1362.9 225.1L1361.8 224.2L1361.0 223.0L1360.6 221.6L1360.4 220.0L1360.3 218.5L1360.1 217.1L1359.7 215.9L1358.9 214.8L1357.9 213.8L1356.7 212.9L1355.5 211.8L1354.6 210.7L1354.0 209.4L1353.9 208.0L1354.2 206.5L1354.7 205.0L1355.4 203.6L1355.8 202.3L1356.0 201.0L1355.8 199.7L1355.4 198.4L1354.7 197.0L1354.2 195.5L1353.9 194.0L1354.0 192.6L1354.6 191.3L1355.5 190.2L1356.7 189.1L1357.9 188.2L1358.9 187.2L1359.7 186.1L1360.1 184.9L1360.3 183.5L1360.4 182.0L1360.6 180.4L1361.0 179.0L1361.8 177.8L1362.9 176.9L1364.3 176.3L1365.8 175.9L1367.3 175.6L1368.7 175.3L1369.8 174.7L1370.8 173.8L1371.6 172.6L1372.4 171.3L1373.3 170.1L1374.4 169.0L1375.6 168.3L1377.0 168.0L1378.5 168.1L1380.0 168.5L1381.4 168.9L1382.8 169.2L1384.1 169.2L1385.4 168.9L1386.7 168.3L1388.0 167.5L1389.4 166.8L1390.8 166.3L1392.2 166.3L1393.6 166.7L1394.9 167.4L1396.0 168.5L1397.1 169.5L1398.2 170.5L1399.3 171.1L1400.6 171.4L1402.0 171.4L1403.6 171.3L1405.1 171.3L1406.6 171.6L1407.9 172.2L1408.9 173.2L1409.7 174.5L1410.2 175.9L1410.7 177.4L1411.2 178.7L1412.0 179.8L1412.9 180.6L1414.2 181.3L1415.6 182.0L1416.9 182.7L1418.1 183.6L1419.0 184.7L1419.4 186.1L1419.5 187.6L1419.3 189.1L1419.1 190.6L1418.9 192.0L1419.1 193.3L1419.6 194.6L1420.3 195.7L1421.3 197.0L1422.1 198.2L1422.8 199.6L1423.0 201.0Z" fill="none" stroke="#dcc078" stroke-width="1.200"/>
<g fill="none" stroke="#ecd890" stroke-width="2.600"><path d="M1380 174h17"/><rect x="1382" y="178" width="13" height="10"/><path d="M1384 183h9" stroke-width="1.800"/><path d="M1388.500 178v10" stroke-width="1.800"/>
<path d="M1377 183q0-5-4.500-5t-4.500 4q0 3.500 3.500 3.500"/><path d="M1400 183q0-5 4.500-5t4.500 4q0 3.500-3.500 3.500"/>
<path d="M1377 182v9q0 5 5 5h13q5 0 5-5v-9"/><path d="M1383 191.500h11" stroke-width="1.500"/><path d="M1383 194h11" stroke-width="1.500"/>
<path d="M1385 197v4q0 4-9 5"/><path d="M1392 197v4q0 4 9 5"/><path d="M1388.500 197v6"/></g>
<text x="1365" y="220" font-size="13" font-weight="bold" fill="#ecd088">金鼎</text>
<path d="M1370 228q3-3 6 0t6-1" stroke="#98a0a8" stroke-width=".9" fill="none"/>
<!-- badge4 -->
<path d="M1426.8 291.0L1422.9 295.5L1425.5 300.9L1420.6 304.3L1421.7 310.1L1416.0 312.1L1415.6 318.1L1409.6 318.5L1407.7 324.2L1401.8 323.1L1398.4 328.0L1393.0 325.4L1388.5 329.3L1384.0 325.4L1378.6 328.0L1375.2 323.1L1369.3 324.2L1367.4 318.5L1361.4 318.1L1361.0 312.1L1355.3 310.1L1356.4 304.3L1351.5 300.9L1354.1 295.5L1350.2 291.0L1354.1 286.5L1351.5 281.1L1356.4 277.7L1355.3 271.9L1361.0 269.9L1361.4 263.9L1367.4 263.5L1369.3 257.8L1375.2 258.9L1378.6 254.0L1384.0 256.6L1388.5 252.7L1393.0 256.6L1398.4 254.0L1401.8 258.9L1407.7 257.8L1409.6 263.5L1415.6 263.9L1416.0 269.9L1421.7 271.8L1420.6 277.7L1425.5 281.1L1422.9 286.5Z" fill="#0b0d12"/><circle cx="1388.500" cy="291" r="32.500" fill="#15110c" stroke="#e9e1c8" stroke-width="2"/><circle cx="1388.500" cy="291" r="27.500" fill="none" stroke="#8a7040" stroke-width=".8"/>
<text x="1370.500" y="285" font-size="13" font-weight="900" fill="#e8aa52">嗨皮</text>
<path d="M1350 291l4 7-4 7h10v-14z" fill="#1a1712"/>
<rect x="1356" y="290" width="60" height="15" fill="#060606"/>
<text x="1367.500" y="303" font-size="13" font-weight="900" fill="#fff">跑分</text>
<text x="1374.500" y="314.500" font-size="6" fill="#e8e8e8" letter-spacing=".5">★★★★★</text>
<!-- badge5 -->
<circle cx="1389" cy="386.500" r="40" fill="url(#gd)"/><circle cx="1389" cy="386.500" r="37" fill="#2a2a2c"/>
<path d="M1369 372l6-3 8 1 8-5 6 1-3 4 4 3-6 1-6 4-4 8-3-1 1-7-5 1-3 4-3-2 2-5z" fill="#f0c010"/>
<path d="M1392 386l3-8 4 1-3 9z" fill="#f0a010"/>
<text x="1362" y="412" font-size="14" font-weight="bold" fill="#f0b020">K<tspan fill="#f4f4f4">G</tspan></text>
<!-- badge6 -->
<circle cx="1387.500" cy="474.500" r="37.500" fill="url(#rg)"/><circle cx="1387.500" cy="474.500" r="34" fill="#1c1a1a"/>
<path d="M1379 461v13M1383 461v13" stroke="#eee" stroke-width="2.200"/><path d="M1365 474q12 13 34 2" fill="none" stroke="#eee" stroke-width="3.500"/>
<text x="1374" y="496" font-size="8.500" font-weight="bold" fill="#ddd">奇趣</text><text x="1374" y="505" font-size="7.500" fill="#bbb">计划</text>
</svg>
<div class="abs" style="left:1384px;top:205px;width:40px;height:50px;border-radius:7px 0 0 7px;background:#4b9cf2;color:#fff"><span class="abs" style="left:3px;top:10px;font-size:18px;font-weight:bold;line-height:24px;font-family:'Liberation Sans',sans-serif">nic</span><svg class="abs" style="left:9px;top:6px" width="14" height="12" viewBox="0 0 14 12"><path d="M3 10L6 3l3 2z" fill="#e0407a"/><path d="M6 3q3-3 7-1q-3 0-4 3z" fill="#30b8a8"/></svg><span class="abs" style="left:1px;top:33px;font-size:13px;font-weight:500;line-height:18px;white-space:nowrap">奖源</span></div>
<div class="abs fcard" style="top:262px"><svg width="24" height="18" viewBox="0 0 24 18"><path d="M4 12V9a8 8 0 0 1 16 0v3" fill="none" stroke="#4a9cf0" stroke-width="2.200"/><rect x="2" y="9" width="4.500" height="7" rx="1.500" fill="#4a9cf0"/><rect x="17.500" y="9" width="4.500" height="7" rx="1.500" fill="#4a9cf0"/></svg><span>客服</span></div>
<div class="abs fcard" style="top:318px"><svg width="24" height="18" viewBox="0 0 24 18"><path d="M6 1.500h12l4.500 5.500L12 17 1.500 7z" fill="none" stroke="#4a9cf0" stroke-width="1.800" stroke-linejoin="round"/><path d="M1.500 7h21M8.500 7l3.500 10 3.500-10M6 1.500l2.500 5.500 3.500-5.500 3.500 5.500 2.500-5.500" fill="none" stroke="#4a9cf0" stroke-width="1.300" stroke-linejoin="round"/></svg><span>挂机</span></div>
<div class="abs fcard" style="top:374px"><svg width="24" height="18" viewBox="0 0 24 18"><circle cx="12" cy="5.500" r="4.300" fill="none" stroke="#4a9cf0" stroke-width="2"/><path d="M3.500 17v-1.500q0-4 4.500-4h8q4.500 0 4.500 4V17z" fill="none" stroke="#4a9cf0" stroke-width="2" stroke-linejoin="round"/></svg><span>我的</span></div>
<div class="abs fcard" style="top:430px"><svg width="24" height="18" viewBox="0 0 24 18"><path d="M5 1.500h14q3 0 3 3v6q0 3-3 3h-9l-5 3.500v-3.500q-3 0-3-3v-6q0-3 3-3z" fill="none" stroke="#4a9cf0" stroke-width="2" stroke-linejoin="round"/><circle cx="7.500" cy="7.500" r="1.200" fill="#4a9cf0"/><circle cx="12" cy="7.500" r="1.200" fill="#4a9cf0"/><circle cx="16.500" cy="7.500" r="1.200" fill="#4a9cf0"/></svg><span>聊天</span></div>
<div class="abs fcard" style="top:486px"><svg width="24" height="18" viewBox="0 0 24 18"><circle cx="12" cy="9" r="8.500" fill="#4a9cf0"/><rect x="10.800" y="3.500" width="2.400" height="7" rx="1" fill="#fff"/><circle cx="12" cy="13.300" r="1.400" fill="#fff"/></svg><span>帮助</span></div>
<div class="abs fcard" style="top:542px"><svg width="24" height="18" viewBox="0 0 24 18"><path d="M1 6h4.500L12 1v16L5.500 12H1z" fill="#4a9cf0"/><path d="M15 5q3 4 0 8M18 2.500q5 6.500 0 13" fill="none" stroke="#4a9cf0" stroke-width="1.800"/></svg><span>声音</span></div>
<div class="abs fcard" style="top:598px"><svg width="24" height="18" viewBox="0 0 24 18"><circle cx="12" cy="9" r="8" fill="none" stroke="#4a9cf0" stroke-width="1.800"/><path d="M12 14V5M8 8.500L12 4.500l4 4" fill="none" stroke="#4a9cf0" stroke-width="2"/></svg><span>顶部</span></div>
</body>
</html>
